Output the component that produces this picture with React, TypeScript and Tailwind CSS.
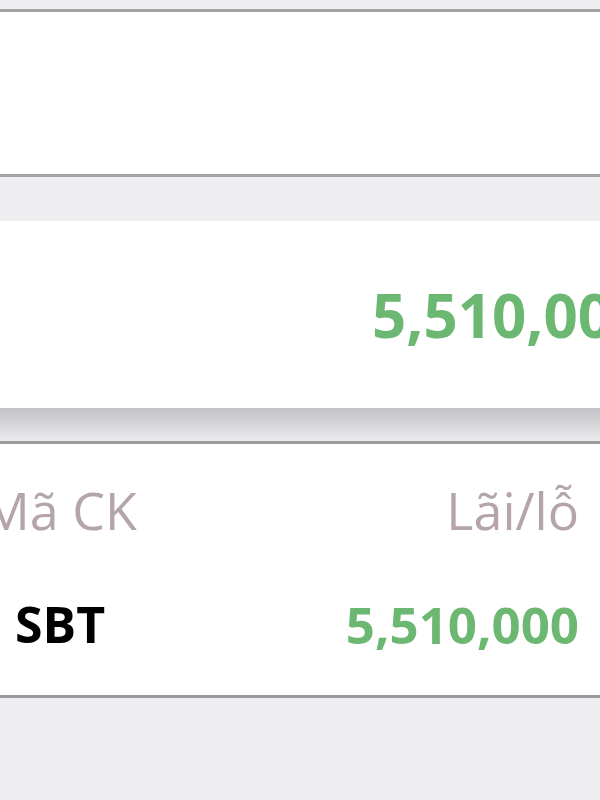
import React from "react";

const App: React.FC = () => {
  return (
    <div className="w-[600px] h-[800px] overflow-hidden bg-[#eeeef0] font-['Open_Sans',sans-serif]">
      {/* top strip */}
      <div className="h-[9px] bg-[#eeeef1]" />
      <div className="h-[3px] bg-[#a3a3a5]" />
      <div className="h-[162px] bg-white" />
      <div className="h-[3px] bg-[#a3a3a5]" />
      <div className="h-[44px] bg-[#eeeef0]" />

      {/* tổng lãi/lỗ */}
      <div className="h-[187px] bg-white pt-[64px] pl-[372px] whitespace-nowrap">
        <span className="text-[60px] leading-none font-bold text-[#6cb872]">5,510,000</span>
      </div>
      <div className="h-[33px] bg-gradient-to-b from-[#c2c2c6] to-[#ececee]" />
      <div className="h-[3px] bg-[#9a9a9c]" />

      {/* bảng */}
      <div className="h-[251px] bg-white pt-[40px]">
        <div className="flex justify-between items-start pr-[21px] whitespace-nowrap">
          <span className="-ml-[17px] text-[52px] leading-none font-normal text-[#b5a5ab]">Mã CK</span>
          <span className="text-[52px] leading-none font-normal text-[#b5a5ab]">Lãi/lỗ</span>
        </div>
        <div className="flex justify-between items-start mt-[63px] pl-[15px] pr-[21px]">
          <span className="text-[50px] leading-none font-bold text-black">SBT</span>
          <span className="text-[51px] leading-none font-bold text-[#6cb872]">5,510,000</span>
        </div>
      </div>
      <div className="h-[3px] bg-[#9a9a9c]" />
      <div className="h-[102px] bg-[#eeeef0]" />
    </div>
  );
};

export default App;
